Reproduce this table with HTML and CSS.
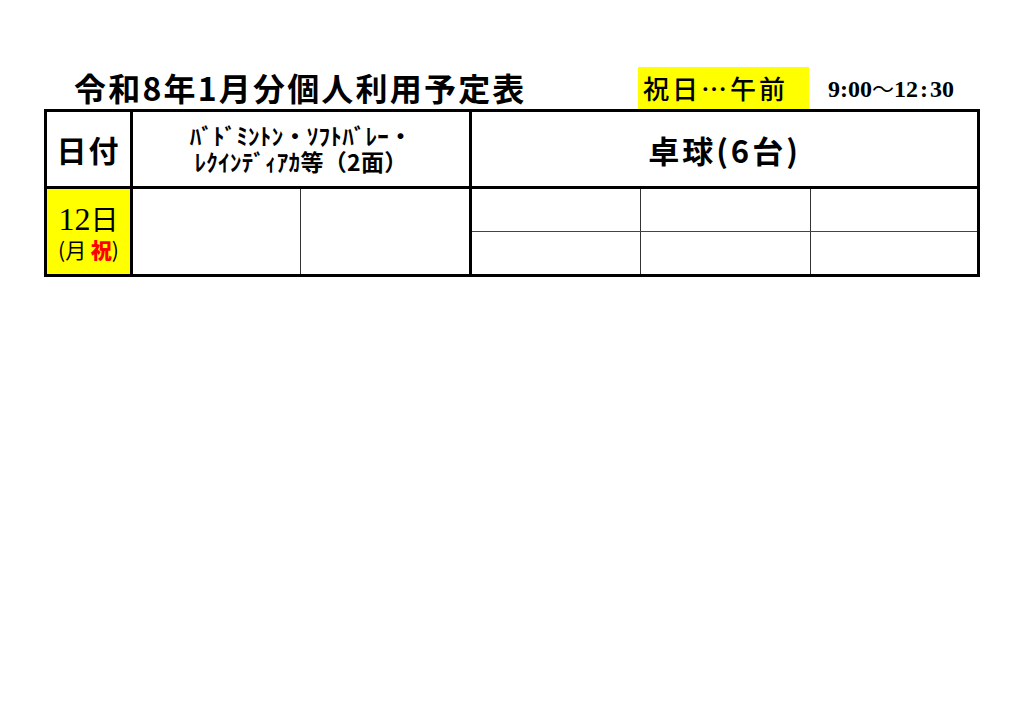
FILE: index.html
```html
<!DOCTYPE html>
<html lang="ja">
<head>
<meta charset="utf-8">
<link rel="stylesheet" href="styles.css">
</head>
<body>
<div class="page">
  <div class="head">
    <h1 class="title">令和8年1月分個人利用予定表</h1>
    <div class="holiday">祝日…午前</div>
    <div class="time">9:00<span class="wave">～</span>12<span class="colon">:</span>30</div>
  </div>
  <table class="sched">
    <colgroup>
      <col class="c-date"><col class="c-b1"><col class="c-b2"><col class="c-t1"><col class="c-t2"><col class="c-t3">
    </colgroup>
    <tr class="hrow">
      <th class="h-date">日付</th>
      <th class="h-bad" colspan="2"><span class="line">ﾊﾞﾄﾞﾐﾝﾄﾝ・ｿﾌﾄﾊﾞﾚｰ・</span><span class="line">ﾚｸｲﾝﾃﾞｨｱｶ等（2面）</span></th>
      <th class="h-tt" colspan="3">卓球(6台)</th>
    </tr>
    <tr class="r1">
      <td class="date" rowspan="2"><span class="day"><span class="num">12</span>日</span><span class="wd">(月 <b class="red">祝</b>)</span></td>
      <td class="thin-r" rowspan="2"></td>
      <td class="grp" rowspan="2"></td>
      <td class="thin-r thin-b"></td>
      <td class="thin-r thin-b"></td>
      <td class="thin-b"></td>
    </tr>
    <tr class="r2">
      <td class="thin-r"></td>
      <td class="thin-r"></td>
      <td></td>
    </tr>
  </table>
</div>
</body>
</html>
```
FILE: styles.css
```css
html, body {
  margin: 0;
  padding: 0;
  background: #fff;
}
body {
  font-family: "Noto Sans CJK JP", "Noto Sans", sans-serif;
  color: #000;
}
.page {
  padding: 66px 0 0 44px;
  width: 936px;
}
.head {
  display: flex;
  align-items: center;
  height: 43px;
}
.title {
  margin: 0 0 0 30px;
  font-size: 32px;
  font-weight: 700;
  letter-spacing: 2.2px;
  width: 564px;
  line-height: 43px;
  white-space: nowrap;
}
.holiday {
  background: #ffff00;
  width: 166px;
  height: 42px;
  padding-left: 5px;
  font-size: 26px;
  line-height: 42px;
  font-weight: 500;
  letter-spacing: 3px;
  white-space: nowrap;
}
.time {
  margin-left: 19px;
  font-family: "Liberation Serif", serif;
  font-weight: 700;
  font-size: 24px;
  line-height: 42px;
  white-space: nowrap;
}
.wave {
  font-family: "Noto Sans CJK JP", sans-serif;
  font-weight: 400;
  font-size: 22px;
}
.colon {
  padding: 0 2px;
}
.sched {
  border-collapse: collapse;
  width: 933px;
  table-layout: fixed;
  border: 3px solid #000;
}
.c-date { width: 86px; }
.c-b1 { width: 169px; }
.c-b2 { width: 170px; }
.c-t1 { width: 170px; }
.c-t2 { width: 170px; }
.c-t3 { width: 168px; }
.sched th, .sched td {
  padding: 0;
  text-align: center;
  vertical-align: middle;
}
.hrow th {
  height: 74px;
  border: 3px solid #000;
  font-weight: 700;
}
.h-date {
  font-size: 30px;
  letter-spacing: 2px;
}
.hrow .h-bad {
  height: 72px;
  padding-bottom: 2px;
  font-size: 23px;
  line-height: 26px;
  letter-spacing: 0.3px;
}
.h-bad .line {
  display: block;
  white-space: nowrap;
}
.h-tt {
  font-size: 31px;
  letter-spacing: 3px;
}
.r1 td, .r2 td {
  height: 42px;
}
.date {
  background: #ffff00;
  border-right: 3px solid #000;
}
.date .day {
  display: block;
  font-size: 28px;
  font-weight: 400;
  line-height: 34px;
}
.date .num {
  font-family: "Liberation Serif", serif;
  font-size: 32px;
}
.date .wd {
  display: block;
  font-size: 21px;
  line-height: 26px;
}
.red {
  color: #ff0000;
  font-weight: 900;
}
.thin-r {
  border-right: 1.5px solid #333;
}
.thin-b {
  border-bottom: 1.5px solid #444;
}
.grp {
  border-right: 3px solid #000;
}
```
